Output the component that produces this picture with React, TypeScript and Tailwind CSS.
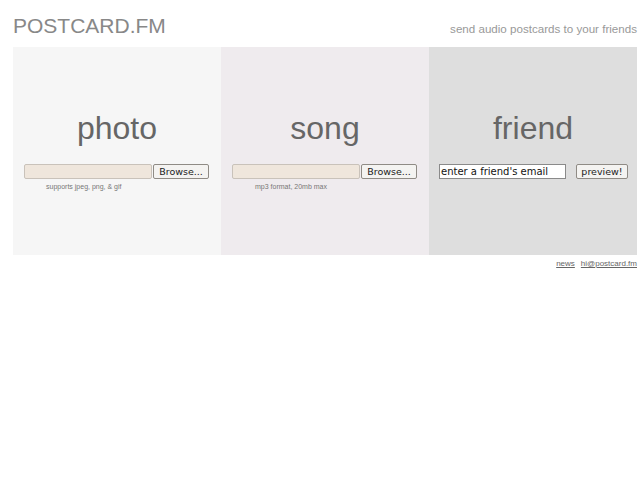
import React from 'react';

const sans = { fontFamily: '"Liberation Sans", Arial, sans-serif' };

// fake file picker, drawn the way the old GTK browser did it
const FilePick = ({ note, noteLeft }: { note: string; noteLeft: string }) => (
  <div className="flex flex-col">
    <div className="flex items-center pl-[11px]">
      <div className="w-[128px] h-[15px] bg-[#efe6dc] border border-[#c9c2ba] rounded-[2px]" />
      <button className="ml-[1px] w-[56px] h-[15px] flex items-center justify-center bg-[#f4f3f1] border border-[#8f8b85] rounded-[2px] text-[9.5px] leading-none text-[#222] font-['DejaVu_Sans',sans-serif]">
        Browse...
      </button>
    </div>
    <div className={`${noteLeft} mt-[3px] text-[7px] leading-[9px] text-[#777]`}>{note}</div>
  </div>
);

const Panel = ({ title, bg, children }: { title: string; bg: string; children: React.ReactNode }) => (
  <div className={`w-[208px] h-[208px] ${bg} flex flex-col pt-[65px]`}>
    <div className="text-center text-[32px] leading-none text-[#666]">{title}</div>
    <div className="mt-[20px]">{children}</div>
  </div>
);

export default function App() {
  return (
    <div className="min-h-[480px] bg-white" style={sans}>
      <div className="ml-[13px] w-[624px]">
        {/* header */}
        <div className="flex items-baseline justify-between pt-[14px] mb-[9px]">
          <div className="text-[21px] leading-[24px] text-[#888]">POSTCARD.FM</div>
          <div className="text-[11.6px] leading-[14px] text-[#999]">send audio postcards to your friends</div>
        </div>

        {/* panels */}
        <div className="flex">
          <Panel title="photo" bg="bg-[#f6f6f6]">
            <FilePick note="supports jpeg, png, & gif" noteLeft="pl-[33px]" />
          </Panel>
          <Panel title="song" bg="bg-[#efebee]">
            <FilePick note="mp3 format, 20mb max" noteLeft="pl-[34px]" />
          </Panel>
          <Panel title="friend" bg="bg-[#dedede]">
            <div className="flex items-center pl-[10px]">
              <div className="w-[127px] h-[15px] bg-white border border-[#8a8a8a] flex items-center px-[1px] text-[10px] leading-none text-[#111] font-['DejaVu_Sans',sans-serif] whitespace-nowrap overflow-hidden">
                enter a friend's email
              </div>
              <button className="ml-[10px] w-[52px] h-[15px] flex items-center justify-center bg-[#f4f3f1] border border-[#8f8b85] rounded-[2px] text-[9.5px] leading-none text-[#222] font-['DejaVu_Sans',sans-serif]">
                preview!
              </button>
            </div>
          </Panel>
        </div>

        {/* footer links */}
        <div className="flex justify-end gap-[6px] mt-[4px] text-[8px] leading-[10px] text-[#666]">
          <a href="#" className="underline">news</a>
          <a href="#" className="underline">hi@postcard.fm</a>
        </div>
      </div>
    </div>
  );
}
